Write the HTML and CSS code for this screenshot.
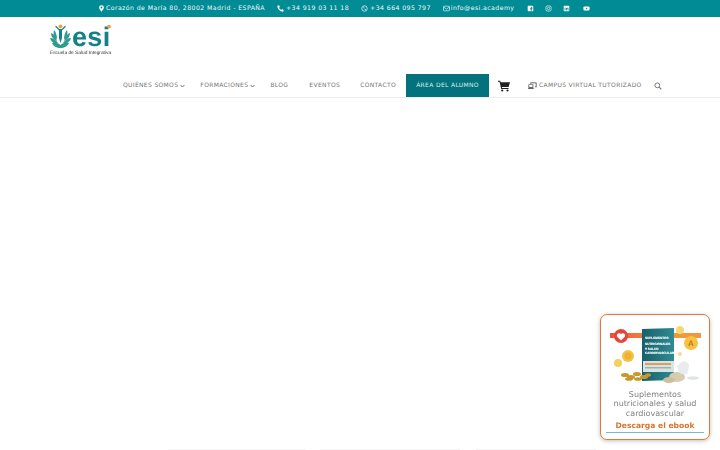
FILE: index.html
```html
<!DOCTYPE html>
<html lang="es">
<head>
<meta charset="utf-8">
<title>ESI</title>
<link rel="stylesheet" href="styles.css">
</head>
<body>
<header class="header">
  <div class="topbar">
    <span class="ti"><svg class="ic" viewBox="0 0 10 10"><path fill="#fff" fill-rule="evenodd" d="M5 .3a3.400 3.400 0 0 0-3.400 3.400C1.600 6 5 9.800 5 9.800S8.400 6 8.400 3.700A3.400 3.400 0 0 0 5 .3zm0 2a1.400 1.400 0 1 1 0 2.800 1.400 1.400 0 0 1 0-2.800z"/></svg>Corazón de María 80, 28002 Madrid - ESPAÑA</span>
    <span class="ti t2"><svg class="ic ic2" viewBox="0 0 10 10"><path fill="#fff" d="M9.500 7.200 7.400 5.800l-1.300 1.300C4.800 6.500 3.500 5.200 2.900 3.900l1.300-1.300L2.800.5.500 1.200C.5 5.800 4.300 9.600 8.900 9.600z"/></svg>+34 919 03 11 18</span>
    <span class="ti t3"><svg class="ic ic2" viewBox="0 0 10 10"><circle cx="5" cy="5" r="3.900" fill="none" stroke="#fff"/><path fill="#fff" d="M3.500 3 4.300 2.900 4.800 4 4.300 4.600C4.600 5.200 5 5.600 5.600 5.900L6.200 5.300 7.200 5.900 7 6.700C5.200 7 3.200 5 3.500 3z"/></svg>+34 664 095 797</span>
    <span class="ti t4"><svg class="ic" viewBox="0 0 10 10"><rect x=".7" y="1.700" width="8.600" height="6.600" rx="1" fill="none" stroke="#fff" stroke-width=".9"/><path d="M1 3l4 2.800L9 3" fill="none" stroke="#fff" stroke-width=".9"/></svg>info@esi.academy</span>
    <span class="soc">
      <svg class="si" viewBox="0 0 10 10"><rect x="1" y="1" width="8" height="8" rx="1" fill="#fff"/><path fill="#008b95" d="M6.700 9V6h1l.2-1.200H6.700V4c0-.4.2-.6.6-.6h.6v-1H7C5.900 2.400 5.400 3 5.400 4v.8h-1V6h1v3z"/></svg>
      <svg class="si" viewBox="0 0 10 10"><rect x="1.300" y="1.300" width="7.400" height="7.400" rx="2" fill="none" stroke="#fff" stroke-width=".9"/><circle cx="5" cy="5" r="1.700" fill="none" stroke="#fff" stroke-width=".9"/><circle cx="7.200" cy="2.800" r=".5" fill="#fff"/></svg>
      <svg class="si" viewBox="0 0 10 10"><rect x="1" y="1" width="8" height="8" rx="1" fill="#fff"/><path fill="#008b95" d="M2.300 4.200h1.200v3.500H2.300zM2.300 2.500h1.200v1H2.300zM4.300 4.200h1.100v.5c.3-.4.700-.6 1.200-.6 1 0 1.300.6 1.300 1.600v2H6.700V5.900c0-.5-.1-.8-.6-.8s-.7.3-.7.8v1.800H4.300z"/></svg>
      <svg class="si yt" viewBox="0 0 10 10"><rect x=".6" y="2" width="8.800" height="6" rx="1.500" fill="#fff"/><path fill="#008b95" d="M4.100 3.600 6.400 5 4.100 6.400z"/></svg>
    </span>
  </div>
  <div class="logo-row">
    <svg class="logo" viewBox="0 -6 66 40" width="66" height="40">
      <g fill="#2f9a8f">
        <path d="M5 6c2 2 3 6 3 9-3-1-4-5-3-9z"/>
        <path d="M2 9c3 1 5 4 6 8-3-1-6-4-6-8z"/>
        <path d="M1 14c3 0 6 2 8 5-4 1-7-1-8-5z"/>
        <path d="M18 6c-2 2-3 6-3 9 3-1 4-5 3-9z"/>
        <path d="M21 9c-3 1-5 4-6 8 3-1 6-4 6-8z"/>
        <path d="M22 14c-3 0-6 2-8 5 4 1 7-1 8-5z"/>
        <path d="M3 19c3-1 6 0 8.500 2 2.500-2 5.500-3 8.500-2-1 3-5 5-8.500 5S4 22 3 19z"/>
      </g>
      <path d="M6 2.500 10 6.500V14l1.500 5 1.500-5V6.500l4-4-1.300-.5-3 3h-2.400l-3-3z" fill="#13808a"/>
      <circle cx="11.500" cy="2.300" r="1.900" fill="#e8a33c"/>
      <text x="23" y="22" class="logo-esi">esi</text>
      <circle cx="60" cy="2.600" r="1.900" fill="#e8a33c"/>
      <text x="1" y="29.500" class="logo-sub">Escuela de Salud Integrativa</text>
    </svg>
  </div>
  <nav class="nav">
    <a class="ni n1">QUIÉNES SOMOS<svg class="chev" viewBox="0 0 6 4"><path d="M.6.7 3 3.200 5.400.7" fill="none" stroke="#555" stroke-width="1"/></svg></a>
    <a class="ni n2">FORMACIONES<svg class="chev" viewBox="0 0 6 4"><path d="M.6.7 3 3.200 5.400.7" fill="none" stroke="#555" stroke-width="1"/></svg></a>
    <a class="ni n3">BLOG</a>
    <a class="ni n4">EVENTOS</a>
    <a class="ni n5">CONTACTO</a>
    <a class="ni cta">ÁREA DEL ALUMNO</a>
    <svg class="cart" viewBox="0 0 12 12"><path fill="#222" d="M0 .8h2.200l.5 1.400H12L10.600 7H3.900l.2.900h6.400v1H3.200L1.500 1.800H0z"/><circle cx="4.200" cy="10.500" r="1.100" fill="#222"/><circle cx="9.500" cy="10.500" r="1.100" fill="#222"/></svg>
    <a class="ni campus"><svg class="lap" viewBox="0 0 11 10"><path fill="#333" d="M3 .6h7.500v6H8.800v-1h.8V1.500H3.900v1H3z"/><path fill="#333" d="M.5 3h6v4.300H.5zM1.400 3.900v2.500h4.200V3.900zM0 7.800h7v1H0z"/></svg>CAMPUS VIRTUAL TUTORIZADO</a>
    <svg class="search" viewBox="0 0 10 10"><circle cx="4.200" cy="4.200" r="3" fill="none" stroke="#777" stroke-width="1.200"/><path d="m6.400 6.400 2.800 2.800" stroke="#777" stroke-width="1.400"/></svg>
  </nav>
</header>
<main class="content"><div class="fade f1"></div><div class="fade f2"></div><div class="fade f3"></div></main>
<aside class="popup">
  <svg class="promo" viewBox="0 0 100 65" width="100" height="65">
    <defs>
      <linearGradient id="bandr" x1="0" x2="1"><stop offset="0" stop-color="#f0503c"/><stop offset="1" stop-color="#f47a3c"/></linearGradient>
      <linearGradient id="bag" x1="0" x2="1"><stop offset="0" stop-color="#1a5f6b"/><stop offset="1" stop-color="#2f8b92"/></linearGradient>
    </defs>
    <rect x="5" y="11" width="32" height="5" fill="url(#bandr)"/>
    <rect x="69" y="11" width="27" height="5" fill="#f4963c"/>
    <circle cx="16" cy="14" r="7" fill="#e8453a"/>
    <path d="M16 18.500 12 14.500a2.400 2.400 0 0 1 4-2.500 2.400 2.400 0 0 1 4 2.500z" fill="#fff"/>
    <path d="M37 7 69 6 69 58 37 59z" fill="url(#bag)"/>
    <rect x="38" y="39" width="31" height="11" fill="#d9e4e0"/>
    <text x="40" y="17" class="book">SUPLEMENTOS</text>
    <text x="40" y="22.500" class="book">NUTRICIONALES</text>
    <text x="40" y="27.500" class="book">Y SALUD</text>
    <text x="40" y="32" class="book">CARDIOVASCULAR</text>
    <rect x="40" y="41" width="26" height="2" fill="#e89a5c"/>
    <rect x="40" y="45" width="26" height="1.500" fill="#8db8bc"/>
    <circle cx="86" cy="21" r="7" fill="#f5c242"/>
    <text x="86" y="24" class="vit">A</text>
    <circle cx="75" cy="8" r="4" fill="#f7d772"/>
    <circle cx="23" cy="34" r="6" fill="#f5c242"/><circle cx="23" cy="34" r="3.500" fill="#eeb02f"/>
    <circle cx="13" cy="41" r="4" fill="#f6cf5c"/>
    <circle cx="75" cy="32" r="2" fill="#f7dc8a"/>
    <g fill="#c8972c">
      <ellipse cx="20" cy="53" rx="4" ry="2"/><ellipse cx="26" cy="55" rx="4" ry="2"/><ellipse cx="32" cy="52" rx="4" ry="2"/><ellipse cx="39" cy="55" rx="4" ry="2"/><ellipse cx="24" cy="57" rx="4" ry="1.800"/><ellipse cx="33" cy="57" rx="4" ry="1.800"/><ellipse cx="43" cy="53" rx="3" ry="1.800"/>
    </g>
    <ellipse cx="72" cy="55" rx="8" ry="5" fill="#d8ccb0"/><ellipse cx="64" cy="58" rx="6" ry="3" fill="#cdbf9e"/>
    <path d="M72 44l5-4.500c3-1 7 1 7 5l-2 8-7-1z" fill="#e8ecec"/>
    <ellipse cx="88" cy="56" rx="6" ry="1.800" fill="#dfe5e5"/>
  </svg>
  <p class="ptext">Suplementos nutricionales y salud cardiovascular</p>
  <p class="pcta">Descarga el ebook</p>
</aside>
</body>
</html>
```
FILE: styles.css
```css
* { box-sizing: border-box; }
html, body { margin: 0; padding: 0; background: #fff; }
body { width: 720px; height: 450px; overflow: hidden; font-family: "DejaVu Sans", sans-serif; text-rendering: geometricPrecision; }
.header { border-bottom: 1px solid #eeeeee; height: 98px; }
.topbar { height: 17px; background: #008b95; color: #f2fbfb; display: flex; align-items: center; padding-left: 98px; font-size: 6.2px; letter-spacing: .42px; white-space: nowrap; }
.ti { display: flex; align-items: center; }
.ic { width: 7px; height: 7px; margin-right: 1px; }
.ic2 { margin-right: 2px; }
.t2, .t3, .t4 { margin-left: 12px; }
.soc { display: flex; align-items: center; gap: 11px; margin-left: 13px; }
.si { width: 7px; height: 7px; }
.yt { margin-left: 2px; }
.logo-row { height: 57px; padding: 1px 0 0 49px; }
.logo { display: block; filter: blur(.3px); }
.logo-esi { font: 700 27px "Liberation Sans", sans-serif; fill: #13808a; letter-spacing: .3px; }
.logo-sub { font: 400 4.800px "Liberation Sans", sans-serif; fill: #333; }
.nav { display: flex; align-items: center; height: 23px; padding-left: 123px; font-size: 6px; letter-spacing: .34px; color: #757575; white-space: nowrap; }
.ni { display: flex; align-items: center; }
.chev { width: 5px; height: 4px; margin-left: 2px; }
.n2, .n3 { margin-left: 15px; }
.n4 { margin-left: 21px; }
.n5 { margin-left: 20px; }
.cta { margin-left: 10px; width: 83px; height: 23px; justify-content: center; background: #04727d; color: #d6eef0; }
.cart { width: 12px; height: 12px; margin-left: 9px; }
.campus { margin-left: 18px; }
.lap { width: 9px; height: 8px; margin-right: 2px; }
.search { width: 8px; height: 8px; margin-left: 12px; }
.content { position: relative; height: 352px; }
.fade { position: absolute; top: 351px; height: 1px; background: #f4f4f4; }
.f1 { left: 168px; width: 138px; }
.f2 { left: 320px; width: 140px; }
.f3 { left: 476px; width: 120px; }
.popup { position: fixed; left: 600px; top: 314px; width: 110px; height: 126px; background: #fff; border: 1.500px solid #e07b35; border-radius: 7px; box-shadow: 0 1px 4px rgba(0,0,0,.25); padding: 7px 5px 0; text-align: center; }
.promo { display: block; width: 100px; height: 65px; margin: 0 -1px; filter: blur(.4px); }
.book { font: 700 3.100px "Liberation Sans", sans-serif; fill: #fff; stroke: #fff; stroke-width: .12px; }
.vit { font: 700 8px "Liberation Sans", sans-serif; fill: #b9781b; text-anchor: middle; }
.ptext { margin: 2.500px 0 0; font-size: 8px; line-height: 9.500px; color: #808080; }
.pcta { margin: 2px 0 0; font-size: 7.600px; line-height: 12px; font-weight: 700; color: #d9742b; border-bottom: 1px solid #7fb8cc; padding-bottom: 0; }
```
